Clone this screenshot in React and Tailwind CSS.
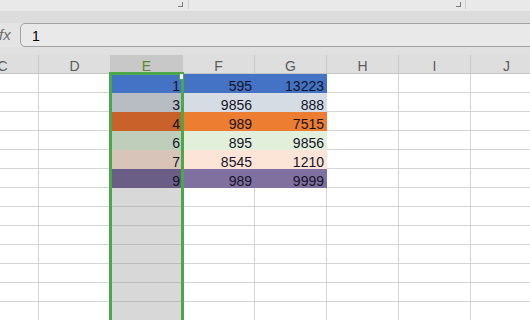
const columns = ["C", "D", "E", "F", "G", "H", "I", "J"]

const dataRows = [
  { e: "1", f: "595", g: "13223", eCls: "bg-[#4472c4] border-[#4472c4]", fgCls: "bg-[#4472c4] border-[#4472c4]" },
  { e: "3", f: "9856", g: "888", eCls: "bg-[#b8bcc3] border-[#b8bcc3]", fgCls: "bg-[#d6dce4] border-[#d6dce4]" },
  { e: "4", f: "989", g: "7515", eCls: "bg-[#c9612a] border-[#c9612a]", fgCls: "bg-[#ed7d31] border-[#ed7d31]" },
  { e: "6", f: "895", g: "9856", eCls: "bg-[#bfcdbb] border-[#bfcdbb]", fgCls: "bg-[#e2efda] border-[#e2efda]" },
  { e: "7", f: "8545", g: "1210", eCls: "bg-[#d8c4b9] border-[#d8c4b9]", fgCls: "bg-[#fce4d6] border-[#fce4d6]" },
  { e: "9", f: "989", g: "9999", eCls: "bg-[#6b5e86] border-[#6b5e86]", fgCls: "bg-[#8070a0] border-[#8070a0]" },
]

function Cell({ value, className = "" }) {
  return (
    <div
      className={`h-[19px] w-[72px] shrink-0 border-b border-r text-right text-[14px] leading-[18px] text-[#141428] ${className}`}
    >
      <span className="relative top-[3px] pr-[2px]">{value}</span>
    </div>
  )
}

function CornerMark() {
  return <div className="h-[5px] w-[5px] border-b border-r border-[#7a7a7a]" />
}

export default function App() {
  const emptyRows = Array.from({ length: 8 })

  return (
    <div
      className="relative h-[320px] w-[530px] overflow-hidden bg-white"
      style={{ fontFamily: '"Liberation Sans", Arial, sans-serif' }}
    >
      {/* ribbon bottom */}
      <div className="flex h-[11px] bg-[#e9e9e9]">
        <div className="flex h-[9px] w-[189px] shrink-0 items-start justify-end border-r border-[#cfcfcf] pr-[5px] pt-[2px]">
          <CornerMark />
        </div>
        <div className="flex h-[9px] w-[277px] shrink-0 items-start justify-end border-r border-[#cfcfcf] pr-[4px] pt-[2px]">
          <CornerMark />
        </div>
      </div>
      <div className="h-[12px] bg-[#dcdcdc]" />

      {/* formula bar */}
      <div className="flex h-[24px] bg-[#e4e4e4]">
        <div className="flex w-[20px] shrink-0 items-center pl-[1px] text-[15px] italic text-[#6e6e6e] -translate-x-[2px]">
          fx
        </div>
        <div className="-mr-[10px] flex flex-1 items-center rounded-[5px] border border-[#a3a3a3] bg-[#e9e9e9] pl-[11px] text-[14px] text-black">
          <span className="relative top-[1px]">1</span>
        </div>
      </div>
      <div className="h-[8px] bg-[#e0e0e0]" />

      {/* column headers */}
      <div className="-ml-[33px] flex h-[19px] border-b border-[#c6c6c6] bg-[#dedede]">
        {columns.map((col) => (
          <div
            key={col}
            className={`h-[18px] w-[72px] shrink-0 border-r border-[#c6c6c6] text-center text-[14px] leading-[18px] ${
              col === "E" ? "bg-[#c8c8c8] text-[#5a8a2a]" : "text-[#5c5c5c]"
            }`}
          >
            <span className="relative top-[2px]">{col}</span>
          </div>
        ))}
      </div>

      {/* data rows */}
      {dataRows.map((row, i) => (
        <div key={i} className="-ml-[33px] flex">
          <Cell className="border-[#d4d4d4]" />
          <Cell className="border-[#d4d4d4]" />
          <Cell value={row.e} className={row.eCls} />
          <Cell value={row.f} className={row.fgCls} />
          <Cell value={row.g} className={row.fgCls} />
          <Cell className="border-[#d4d4d4]" />
          <Cell className="border-[#d4d4d4]" />
          <Cell className="border-[#d4d4d4]" />
        </div>
      ))}

      {emptyRows.map((_, i) => (
        <div key={i} className="-ml-[33px] flex">
          <Cell className="border-[#d4d4d4]" />
          <Cell className="border-[#d4d4d4]" />
          <Cell className="border-b-[#bcbcbc] border-r-white bg-[#d8d8d8]" />
          <Cell className="border-[#d4d4d4]" />
          <Cell className="border-[#d4d4d4]" />
          <Cell className="border-[#d4d4d4]" />
          <Cell className="border-[#d4d4d4]" />
          <Cell className="border-[#d4d4d4]" />
        </div>
      ))}

      {/* column selection */}
      <div className="pointer-events-none absolute bottom-0 left-[109px] top-[72px] w-[75px] border-[3px] border-b-0 border-[#4aa84a]">
        <div className="absolute -right-[3px] -top-[2px] h-[7px] w-[5px] border border-[#4aa84a] bg-white" />
      </div>
    </div>
  )
}
